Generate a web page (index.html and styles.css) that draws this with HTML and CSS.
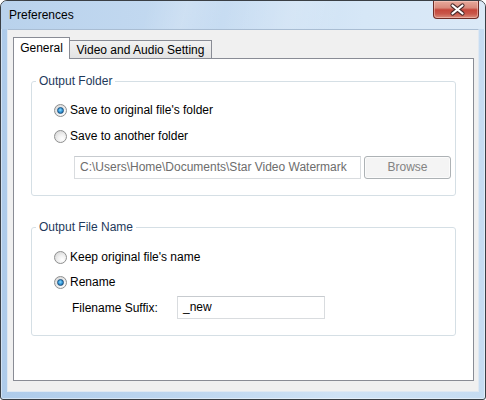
FILE: index.html
```html
<!DOCTYPE html>
<html>
<head>
<meta charset="utf-8">
<title>Preferences</title>
<link rel="stylesheet" href="styles.css">
</head>
<body>
<div class="window">
  <div class="titlebar">
    <span class="title">Preferences</span>
    <div class="close">
      <svg width="44" height="17" viewBox="0 0 44 17">
        <path d="M18.5 4.5 L28.5 12.5 M28.5 4.5 L18.5 12.5" stroke="#4a2b2b" stroke-width="4.2" stroke-linecap="round" fill="none"/>
        <path d="M18.5 4.5 L28.5 12.5 M28.5 4.5 L18.5 12.5" stroke="#ffffff" stroke-width="2.2" stroke-linecap="round" fill="none"/>
      </svg>
    </div>
  </div>
  <div class="client">
    <div class="tabs">
      <div class="tab active">General</div>
      <div class="tab">Video and Audio Setting</div>
    </div>
    <div class="panel">
      <fieldset class="group group-folder">
        <legend>Output Folder</legend>
        <div class="group-body">
          <label class="opt"><span class="radio checked"></span>Save to original file's folder</label>
          <label class="opt opt-2"><span class="radio"></span>Save to another folder</label>
          <div class="path-row">
            <div class="field field-disabled">C:\Users\Home\Documents\Star Video Watermark</div>
            <div class="btn btn-disabled">Browse</div>
          </div>
        </div>
      </fieldset>
      <fieldset class="group group-name">
        <legend>Output File Name</legend>
        <div class="group-body">
          <label class="opt"><span class="radio"></span>Keep original file's name</label>
          <label class="opt opt-rename"><span class="radio checked"></span>Rename</label>
          <div class="suffix-row">
            <span class="suffix-label">Filename Suffix:</span>
            <div class="field field-suffix">_new</div>
          </div>
        </div>
      </fieldset>
    </div>
  </div>
</div>
</body>
</html>
```

FILE: styles.css
```css
html, body {
  margin: 0;
  padding: 0;
  background: #ffffff;
}

body {
  font-family: "Liberation Sans", Arial, sans-serif;
  font-size: 12px;
  color: #000000;
}

.window {
  width: 486px;
  height: 400px;
  box-sizing: border-box;
  border: 1px solid #3a3f45;
  border-radius: 7px 7px 3px 3px;
  background:
    linear-gradient(to right, #aecbea 0%, #bcd5ef 35%, #cfe2f5 70%, #c6dcf2 100%);
  box-shadow: inset 0 0 0 1px rgba(255, 255, 255, 0.45);
  display: flex;
  flex-direction: column;
  overflow: hidden;
}

.titlebar {
  height: 28px;
  flex: none;
  display: flex;
  align-items: center;
  padding-left: 8px;
  background:
    linear-gradient(105deg, rgba(255,255,255,0) 30%, rgba(255,255,255,0.18) 38%, rgba(255,255,255,0) 46%, rgba(255,255,255,0.15) 60%, rgba(255,255,255,0) 70%),
    linear-gradient(to right, #b9d2ec 0%, #c4daf1 40%, #d6e7f7 75%, #dbe9f7 100%);
}

.title {
  font-size: 12px;
  color: #000000;
  line-height: 15px;
}

.close {
  margin-left: auto;
  margin-right: 6px;
  align-self: flex-start;
  width: 46px;
  height: 18px;
  box-sizing: border-box;
  border: 1px solid #6e2c26;
  border-top: none;
  border-radius: 0 0 4px 4px;
  background: linear-gradient(#e8aa9c 0%, #d98a7c 40%, #c5473b 52%, #c9574a 75%, #d98c7c 100%);
  box-shadow: inset 0 0 0 1px rgba(255, 220, 210, 0.45);
  display: flex;
  align-items: center;
  justify-content: center;
}

.close svg {
  display: block;
}

.client {
  flex: 1;
  margin: 0 6px 7px;
  background: #f0f0f0;
  border: 1px solid #dfe8f2;
  border-top-color: #a9bdd3;
  padding: 7px 4px 10px 5px;
  display: flex;
  flex-direction: column;
}

.tabs {
  display: flex;
  align-items: flex-end;
  height: 21px;
  flex: none;
}

.tab {
  box-sizing: border-box;
  height: 18px;
  border: 1px solid #898c95;
  border-bottom: none;
  background: linear-gradient(#f2f2f2, #e3e3e3);
  line-height: 18px;
  text-align: center;
  white-space: nowrap;
}

.tab.active {
  position: relative;
  z-index: 1;
  width: 57px;
  height: 22px;
  margin-bottom: -1px;
  background: #ffffff;
  line-height: 21px;
}

.tab:not(.active) {
  width: 142px;
  border-left: none;
}

.panel {
  flex: 1;
  background: #ffffff;
  border: 1px solid #898c95;
  padding: 0 17px;
}

.group {
  margin: 15px 0 0;
  padding: 0 4px 16px 4px;
  border: 1px solid #d5dfe5;
  border-radius: 3px;
  min-width: 0;
}

.group legend {
  padding: 0 3px;
  line-height: 15px;
  color: #1e395b;
}

.group-name {
  margin-top: 24px;
}

.group-body {
  padding-left: 18px;
  display: flex;
  flex-direction: column;
}

.group-folder .group-body {
  padding-top: 13px;
}

.group-name .group-body {
  padding-top: 14px;
}

.opt {
  display: flex;
  align-items: center;
  height: 16px;
  line-height: 16px;
}

.opt-2 {
  margin-top: 10px;
}

.opt-rename {
  margin-top: 9px;
}

.radio {
  width: 13px;
  height: 13px;
  box-sizing: border-box;
  border-radius: 50%;
  border: 1px solid #8e8f8f;
  background: radial-gradient(circle at 65% 70%, #ffffff 0%, #f0f0f0 40%, #cfcfcf 100%);
  margin-right: 3px;
  flex: none;
  display: flex;
  align-items: center;
  justify-content: center;
}

.radio.checked::after {
  content: "";
  width: 7px;
  height: 7px;
  box-sizing: border-box;
  border-radius: 50%;
  border: 1px solid #1c4f7c;
  background: radial-gradient(circle at 45% 40%, #8fdcff 0%, #3a9ede 45%, #1a5d98 100%);
}

.path-row {
  display: flex;
  margin-top: 12px;
  margin-left: 20px;
  gap: 3px;
}

.field {
  box-sizing: border-box;
  height: 23px;
  border: 1px solid #d9dcdf;
  border-top-color: #c7cbcf;
  background: #ffffff;
  padding: 0 5px;
  line-height: 21px;
  white-space: nowrap;
  overflow: hidden;
}

.field-disabled {
  width: 287px;
  color: #6d6d6d;
}

.btn {
  box-sizing: border-box;
  flex: 1;
  height: 23px;
  border: 1px solid #adb2b5;
  border-radius: 3px;
  background: #f4f4f4;
  box-shadow: inset 0 0 0 1px #fbfbfb;
  text-align: center;
  line-height: 21px;
}

.btn-disabled {
  color: #838383;
}

.suffix-row {
  display: flex;
  align-items: center;
  margin-top: 6px;
  padding-left: 18px;
}

.suffix-label {
  width: 105px;
  flex: none;
}

.field-suffix {
  width: 148px;
  color: #000000;
}
```
